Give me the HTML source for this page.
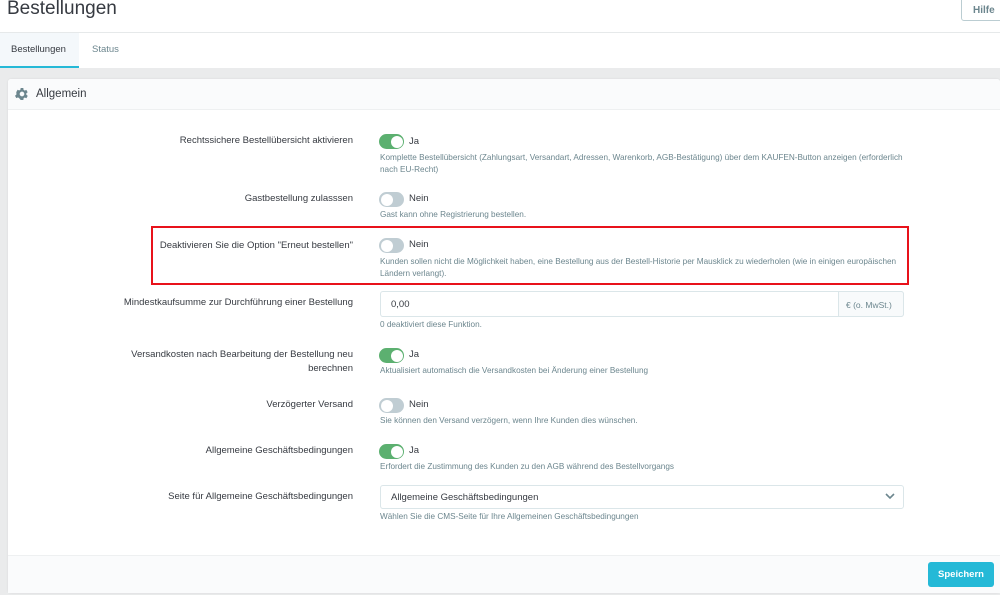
<!DOCTYPE html>
<html><head><meta charset="utf-8"><style>
*{margin:0;padding:0;box-sizing:border-box}
body{width:1000px;height:595px;overflow:hidden;background:#eaebec;font-family:"Liberation Sans",sans-serif;position:relative;color:#363a41}
.a{position:absolute}
.lbl{position:absolute;right:647px;font-size:9.5px;color:#363a41;text-align:right;line-height:14px}
.help{position:absolute;left:380px;font-size:8.2px;color:#6c868e;line-height:12px;width:530px}
.tg{position:absolute;left:379px;width:25px;height:15px;border-radius:8px}
.tg i{position:absolute;top:1.5px;width:12px;height:12px;border-radius:50%;background:#fff}
.on{background:#5cb070}.on i{right:1.5px}
.off{background:#c0cdd3}.off i{left:1.5px}
.tt{position:absolute;left:409px;font-size:9.5px;color:#363a41;line-height:14px}
</style></head><body>
<div class="a" style="left:0;top:0;width:1000px;height:68px;background:#fff"></div>
<div class="a" style="left:0;top:32px;width:1000px;height:1px;background:#e6e9ea"></div>
<div class="a" style="left:7px;top:-2px;font-size:19px;color:#363a41">Bestellungen</div>
<div class="a" style="left:961px;top:-3px;width:45px;height:24px;border:1px solid #bbcdd2;border-radius:3px;background:#fff;font-size:10px;font-weight:bold;color:#6c868e;padding:7px 0 0 11px">Hilfe</div>
<div class="a" style="left:0;top:33px;width:79px;height:35px;background:#f4f8fb;border-bottom:2px solid #25b9d7"></div>
<div class="a" style="left:11px;top:44px;font-size:9.5px;color:#363a41">Bestellungen</div>
<div class="a" style="left:92px;top:44px;font-size:9.5px;color:#6c868e">Status</div>
<div class="a" style="left:8px;top:79px;width:992px;height:514px;background:#fff;border-radius:3px;box-shadow:0 0 2px rgba(0,0,0,.08)"></div>
<div class="a" style="left:8px;top:79px;width:992px;height:31px;background:#fafbfc;border-bottom:1px solid #eef0f1;border-radius:3px 3px 0 0"></div>
<svg class="a" style="left:14px;top:86px" width="16" height="16" viewBox="0 0 24 24"><path fill="#6c868e" d="M19.4 13a7.5 7.5 0 0 0 0-2l2.1-1.6-2-3.5-2.5 1a7.6 7.6 0 0 0-1.7-1L15 3h-4l-.4 2.7a7.6 7.6 0 0 0-1.7 1l-2.5-1-2 3.5L4.600 11a7.5 7.5 0 0 0 0 2l-2.1 1.6 2 3.5 2.5-1a7.6 7.6 0 0 0 1.7 1L11 21h4l.4-2.7a7.6 7.6 0 0 0 1.7-1l2.5 1 2-3.5zM13 15.5a3.5 3.5 0 1 1 0-7 3.5 3.5 0 0 1 0 7z" transform="translate(-1 0)"/></svg>
<div class="a" style="left:36px;top:88px;font-size:11.5px;color:#363a41">Allgemein</div>

<div class="lbl" style="top:134px">Rechtssichere Bestellübersicht aktivieren</div>
<div class="tg on" style="top:134px"><i></i></div><div class="tt" style="top:135px">Ja</div>
<div class="help" style="top:152px">Komplette Bestellübersicht (Zahlungsart, Versandart, Adressen, Warenkorb, AGB-Bestätigung) über dem KAUFEN-Button anzeigen (erforderlich nach EU-Recht)</div>

<div class="lbl" style="top:192px">Gastbestellung zulasssen</div>
<div class="tg off" style="top:192px"><i></i></div><div class="tt" style="top:192px">Nein</div>
<div class="help" style="top:209px">Gast kann ohne Registrierung bestellen.</div>

<div class="a" style="left:151px;top:226px;width:758px;height:59px;border:2px solid #e8121b"></div>
<div class="lbl" style="top:239px">Deaktivieren Sie die Option "Erneut bestellen"</div>
<div class="tg off" style="top:238px"><i></i></div><div class="tt" style="top:238px">Nein</div>
<div class="help" style="top:256px">Kunden sollen nicht die Möglichkeit haben, eine Bestellung aus der Bestell-Historie per Mausklick zu wiederholen (wie in einigen europäischen Ländern verlangt).</div>

<div class="lbl" style="top:296px">Mindestkaufsumme zur Durchführung einer Bestellung</div>
<div class="a" style="left:380px;top:291px;width:524px;height:26px;border:1px solid #dbe6e9;border-radius:3px;font-size:9.5px;color:#363a41;padding:7px 0 0 10px">0,00</div>
<div class="a" style="left:838px;top:291px;width:66px;height:26px;border:1px solid #dbe6e9;border-radius:0 3px 3px 0;background:#f8fafb;font-size:8.5px;color:#6c868e;padding:8px 0 0 7px">€ (o. MwSt.)</div>
<div class="help" style="top:319px">0 deaktiviert diese Funktion.</div>

<div class="lbl" style="top:348px">Versandkosten nach Bearbeitung der Bestellung neu<br>berechnen</div>
<div class="tg on" style="top:348px"><i></i></div><div class="tt" style="top:348px">Ja</div>
<div class="help" style="top:365px">Aktualisiert automatisch die Versandkosten bei Änderung einer Bestellung</div>

<div class="lbl" style="top:398px">Verzögerter Versand</div>
<div class="tg off" style="top:398px"><i></i></div><div class="tt" style="top:398px">Nein</div>
<div class="help" style="top:415px">Sie können den Versand verzögern, wenn Ihre Kunden dies wünschen.</div>

<div class="lbl" style="top:444px">Allgemeine Geschäftsbedingungen</div>
<div class="tg on" style="top:444px"><i></i></div><div class="tt" style="top:444px">Ja</div>
<div class="help" style="top:461px">Erfordert die Zustimmung des Kunden zu den AGB während des Bestellvorgangs</div>

<div class="lbl" style="top:490px">Seite für Allgemeine Geschäftsbedingungen</div>
<div class="a" style="left:380px;top:485px;width:524px;height:24px;border:1px solid #dbe6e9;border-radius:3px;font-size:9.5px;color:#363a41;padding:6px 0 0 10px">Allgemeine Geschäftsbedingungen</div>
<svg class="a" style="left:885px;top:493px" width="10" height="7" viewBox="0 0 10 7"><path d="M1 1l4 4 4-4" fill="none" stroke="#6c868e" stroke-width="1.6"/></svg>
<div class="help" style="top:511px">Wählen Sie die CMS-Seite für Ihre Allgemeinen Geschäftsbedingungen</div>

<div class="a" style="left:8px;top:555px;width:992px;height:38px;background:#fafbfc;border-top:1px solid #eef0f1"></div>
<div class="a" style="left:928px;top:562px;width:66px;height:25px;background:#25b9d7;border-radius:3px;color:#fff;font-size:9.5px;font-weight:bold;text-align:center;line-height:25px">Speichern</div>
</body></html>
